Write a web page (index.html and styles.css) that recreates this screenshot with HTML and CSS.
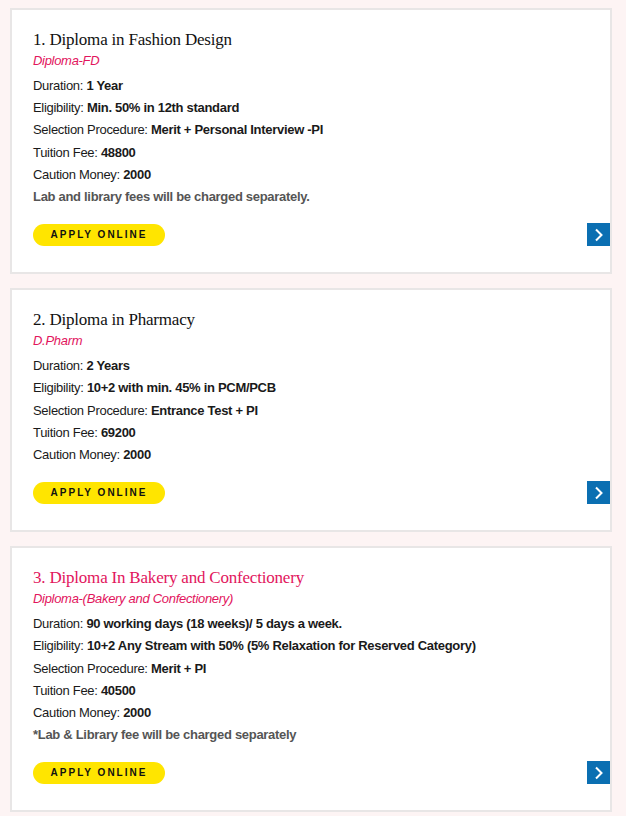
FILE: index.html
```html
<!DOCTYPE html>
<html lang="en">

<head>
    <meta charset="UTF-8">
    <meta name="viewport" content="width=device-width, initial-scale=1.0">
    <title>Diploma Courses</title>
    <link rel="stylesheet" href="styles.css">
</head>

<body>
    <div class="courses">
        <div class="course">
            <h3 class="course-title">1. Diploma in Fashion Design</h3>
            <p class="course-code">Diploma-FD</p>
            <ul class="details">
                <li>Duration: <b>1 Year</b></li>
                <li>Eligibility: <b>Min. 50% in 12th standard</b></li>
                <li>Selection Procedure: <b>Merit + Personal Interview -PI</b></li>
                <li>Tuition Fee: <b>48800</b></li>
                <li>Caution Money: <b>2000</b></li>
                <li class="note">Lab and library fees will be charged separately.</li>
            </ul>
            <div class="course-footer">
                <a href="#" class="apply">APPLY ONLINE</a>
                <a href="#" class="more">
                    <svg width="12" height="14" viewBox="0 0 12 14"><path d="M3 1.5 L8.5 7 L3 12.5" fill="none" stroke="#fff" stroke-width="2"/></svg>
                </a>
            </div>
        </div>

        <div class="course">
            <h3 class="course-title">2. Diploma in Pharmacy</h3>
            <p class="course-code">D.Pharm</p>
            <ul class="details">
                <li>Duration: <b>2 Years</b></li>
                <li>Eligibility: <b>10+2 with min. 45% in PCM/PCB</b></li>
                <li>Selection Procedure: <b>Entrance Test + PI</b></li>
                <li>Tuition Fee: <b>69200</b></li>
                <li>Caution Money: <b>2000</b></li>
            </ul>
            <div class="course-footer">
                <a href="#" class="apply">APPLY ONLINE</a>
                <a href="#" class="more">
                    <svg width="12" height="14" viewBox="0 0 12 14"><path d="M3 1.5 L8.5 7 L3 12.5" fill="none" stroke="#fff" stroke-width="2"/></svg>
                </a>
            </div>
        </div>

        <div class="course">
            <h3 class="course-title active">3. Diploma In Bakery and Confectionery</h3>
            <p class="course-code">Diploma-(Bakery and Confectionery)</p>
            <ul class="details">
                <li>Duration: <b>90 working days (18 weeks)/ 5 days a week.</b></li>
                <li>Eligibility: <b>10+2 Any Stream with 50% (5% Relaxation for Reserved Category)</b></li>
                <li>Selection Procedure: <b>Merit + PI</b></li>
                <li>Tuition Fee: <b>40500</b></li>
                <li>Caution Money: <b>2000</b></li>
                <li class="note">*Lab &amp; Library fee will be charged separately</li>
            </ul>
            <div class="course-footer">
                <a href="#" class="apply">APPLY ONLINE</a>
                <a href="#" class="more">
                    <svg width="12" height="14" viewBox="0 0 12 14"><path d="M3 1.5 L8.5 7 L3 12.5" fill="none" stroke="#fff" stroke-width="2"/></svg>
                </a>
            </div>
        </div>
    </div>
</body>

</html>
```

FILE: styles.css
```css
body {
    margin: 0;
    padding: 0;
    background-color: #fdf4f4;
    font-family: "Liberation Sans", Arial, sans-serif;
    color: #1a1a1a;
}

.courses {
    padding: 8px 14px 0 10px;
}

.course {
    background-color: #fff;
    border: 2px solid #e8e6e6;
    padding: 19px 0 26px 21px;
    margin-bottom: 14px;
}

.course-title {
    font-family: "Liberation Serif", "Times New Roman", serif;
    font-weight: normal;
    font-size: 17px;
    letter-spacing: -0.2px;
    line-height: 22px;
    margin: 0;
    color: #111;
}

.course-title.active {
    color: #e2155d;
}

.course-code {
    font-style: italic;
    font-size: 13px;
    letter-spacing: -0.3px;
    line-height: 18px;
    color: #e2155d;
    margin: 1px 0 5px;
}

.details {
    list-style: none;
    margin: 0;
    padding: 0;
}

.details li {
    font-size: 13px;
    letter-spacing: -0.3px;
    line-height: 22.2px;
}

.details b {
    font-weight: bold;
}

.details .note {
    font-weight: bold;
    color: #555;
}

.course-footer {
    display: flex;
    justify-content: space-between;
    align-items: flex-end;
    margin-top: 15px;
}

.apply {
    display: inline-block;
    background-color: #ffe500;
    color: #111;
    font-size: 10px;
    font-weight: bold;
    letter-spacing: 2px;
    text-decoration: none;
    width: 132px;
    height: 22px;
    line-height: 22px;
    text-align: center;
    border-radius: 11px;
}

.more {
    display: flex;
    align-items: center;
    justify-content: center;
    width: 23px;
    height: 23px;
    background-color: #0b6fb2;
}
```
